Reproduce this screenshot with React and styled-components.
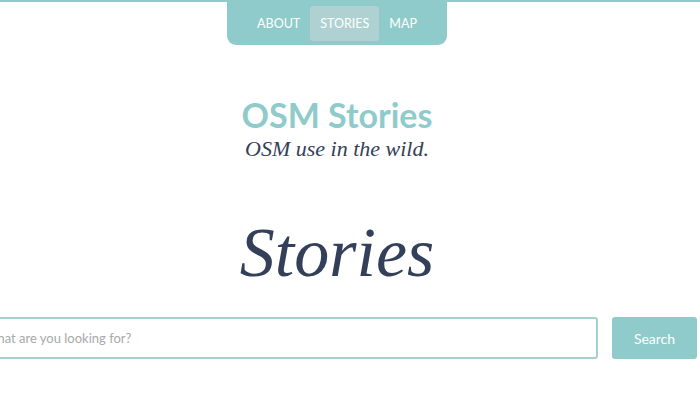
import React from 'react';
import styled, { createGlobalStyle } from 'styled-components';

const teal = '#8fcbca';
const ink = '#34405a';

const GlobalStyle = createGlobalStyle`
  html, body {
    margin: 0;
    padding: 0;
    background: #fff;
    overflow: hidden;
  }
  body {
    border-top: 2px solid ${teal};
    font-family: Lato, 'Open Sans', sans-serif;
  }
`;

const Page = styled.div`
  width: 674px;
  display: flex;
  flex-direction: column;
  align-items: center;
`;

const Nav = styled.nav`
  display: flex;
  margin-top: -2px;
  padding: 6px 20px 4px;
  background: ${teal};
  border-radius: 0 0 9px 9px;
`;

const NavItem = styled.a`
  display: block;
  padding: 9px 10px;
  font-size: 12.5px;
  line-height: 17px;
  color: #fff;
  text-transform: uppercase;
  border-radius: 3px;
  background: ${(p) => (p.active ? '#afd1d1' : 'transparent')};
`;

const Title = styled.h1`
  margin: 52px 0 0;
  font-family: Lato, sans-serif;
  font-weight: 700;
  font-size: 34px;
  line-height: 36px;
  color: ${teal};
`;

const Tagline = styled.p`
  margin: 4px 0 0;
  font-family: 'Liberation Serif', serif;
  font-style: italic;
  font-size: 22px;
  line-height: 24px;
  color: ${ink};
`;

const Heading = styled.h2`
  margin: 52px 0 0;
  font-family: 'Liberation Serif', serif;
  font-style: italic;
  font-weight: 400;
  font-size: 70px;
  line-height: 80px;
  color: ${ink};
`;

const SearchRow = styled.form`
  display: flex;
  gap: 14px;
  width: 720px;
  margin-top: 24px;
`;

const Input = styled.input`
  flex: 1;
  height: 42px;
  box-sizing: border-box;
  border: 2px solid #a6d0cf;
  border-radius: 3px;
  padding: 0 5px;
  font-family: Lato, sans-serif;
  font-size: 13px;
  color: ${ink};
  outline: none;
  &::placeholder {
    color: #a9a9a9;
  }
`;

const Button = styled.button`
  width: 85px;
  height: 42px;
  border: none;
  border-radius: 3px;
  background: ${teal};
  color: #fff;
  font-family: Lato, sans-serif;
  font-size: 14px;
`;

export default function App() {
  return (
    <>
      <GlobalStyle />
      <Page>
        <Nav>
          <NavItem>About</NavItem>
          <NavItem active>Stories</NavItem>
          <NavItem>Map</NavItem>
        </Nav>
        <Title>OSM Stories</Title>
        <Tagline>OSM use in the wild.</Tagline>
        <Heading>Stories</Heading>
        <SearchRow onSubmit={(e) => e.preventDefault()}>
          <Input placeholder="What are you looking for?" />
          <Button type="submit">Search</Button>
        </SearchRow>
      </Page>
    </>
  );
}
